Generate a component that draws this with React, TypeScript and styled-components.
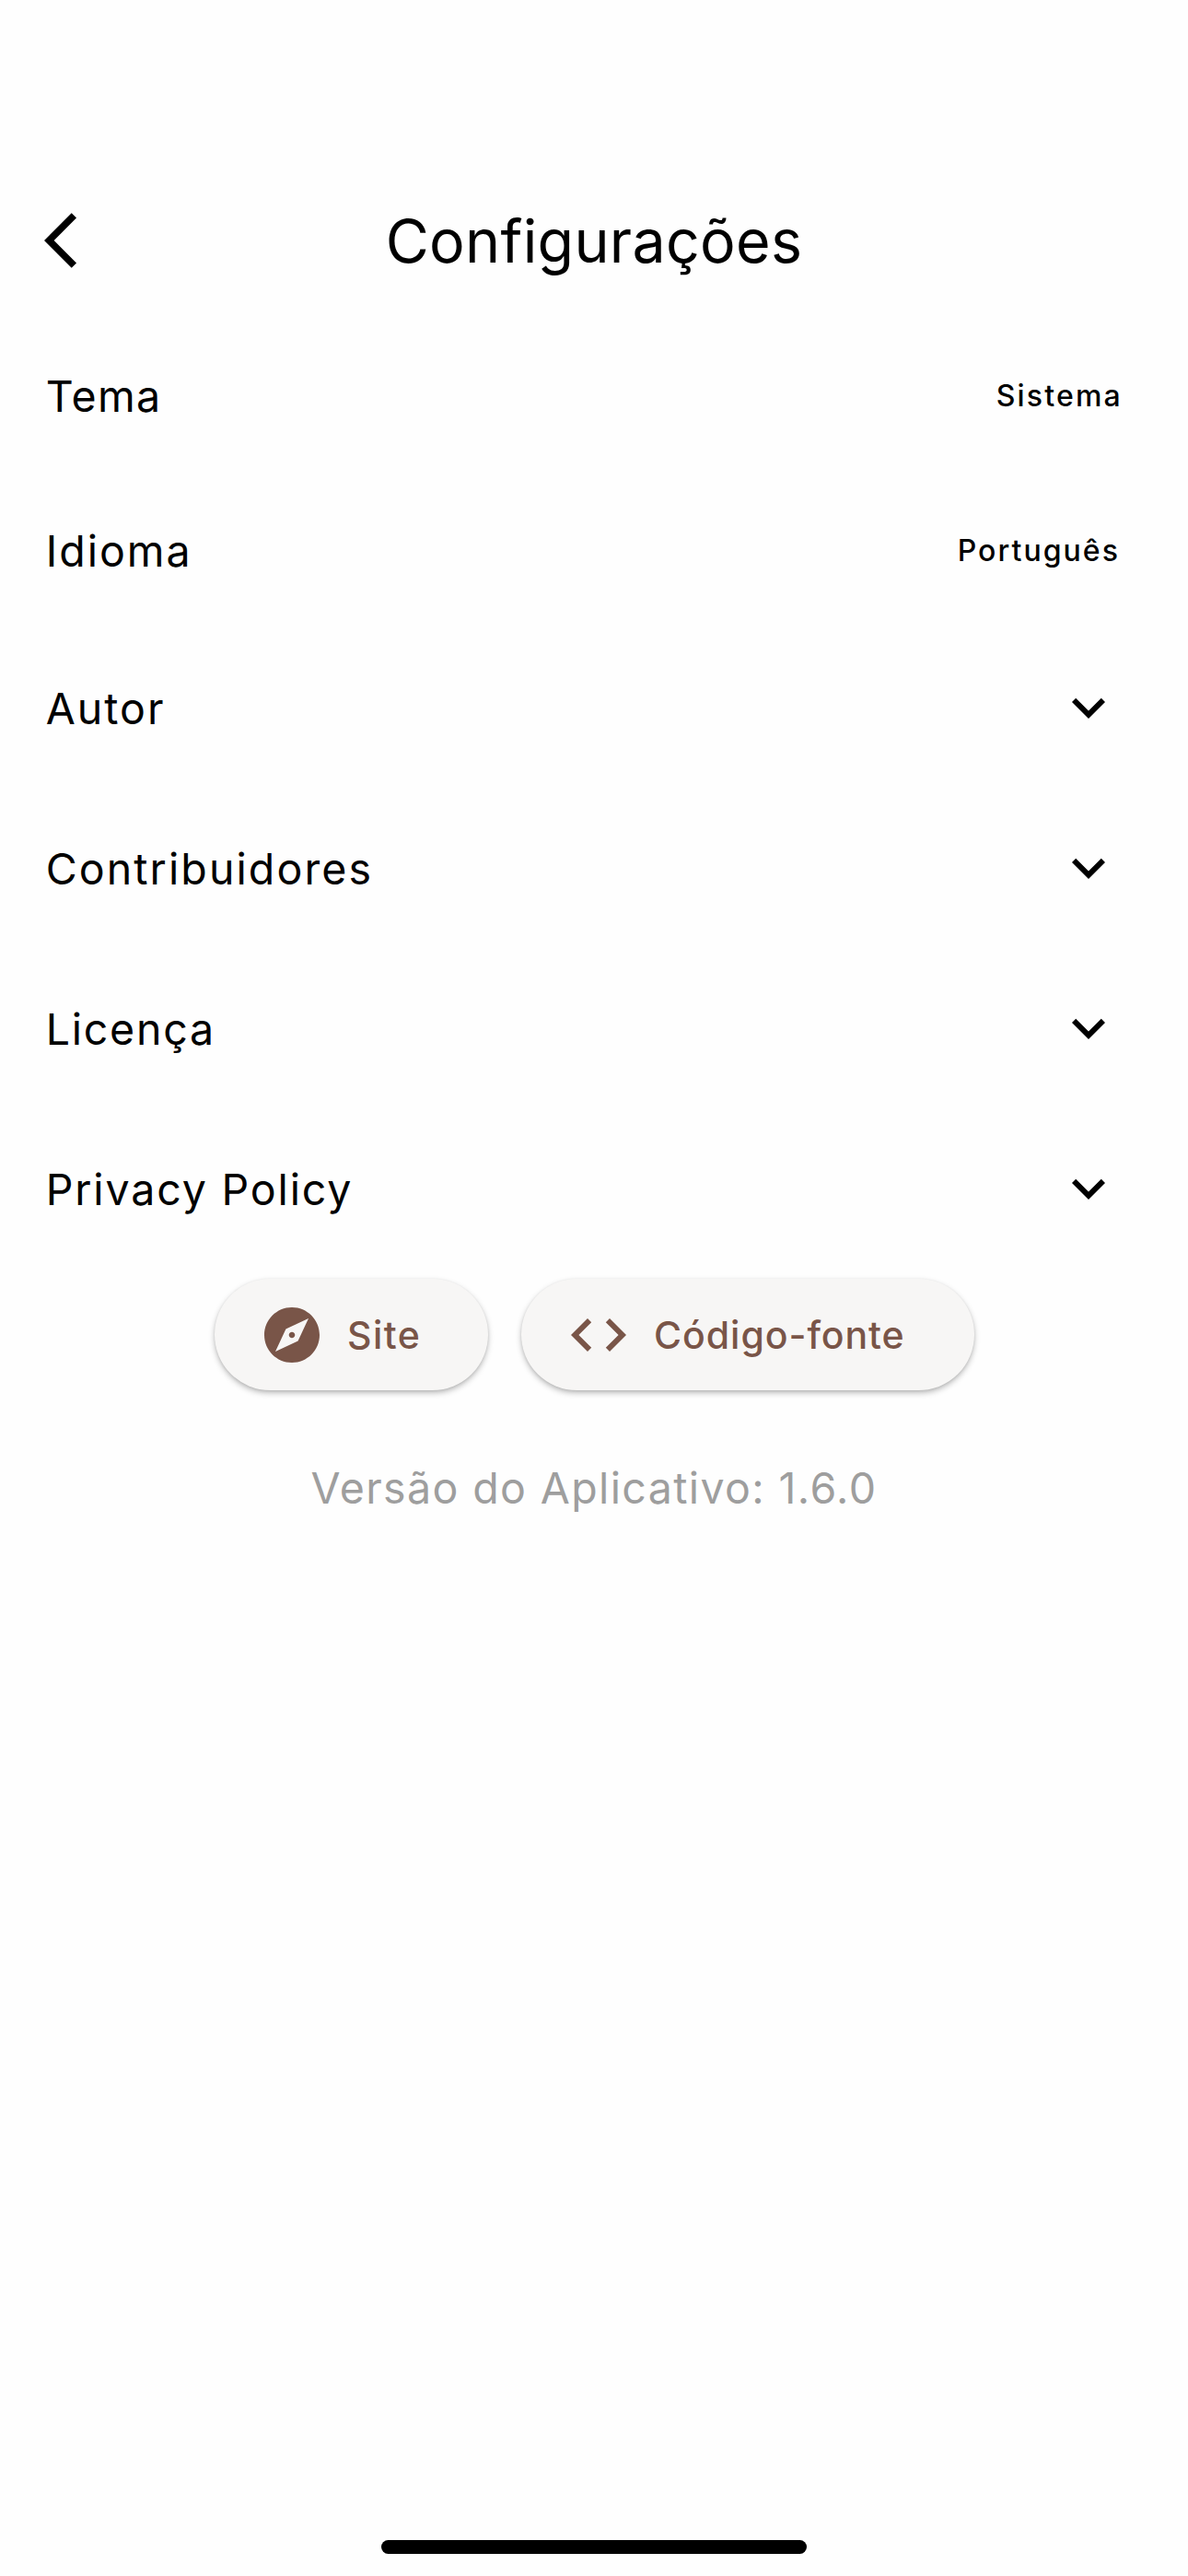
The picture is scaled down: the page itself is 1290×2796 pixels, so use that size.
import React from "react";
import styled, { createGlobalStyle } from "styled-components";

const GlobalStyle = createGlobalStyle`
  * { box-sizing: border-box; }
  html, body { margin: 0; padding: 0; background: #fefefe; }
`;

const Screen = styled.div`
  display: flex;
  flex-direction: column;
  width: 1290px;
  height: 2796px;
  padding-top: 178px;
  overflow: hidden;
  background: #fefefe;
  color: #000;
  font-family: Inter, "Liberation Sans", sans-serif;
`;

const AppBar = styled.header`
  display: grid;
  grid-template-columns: 168px 1fr 168px;
  align-items: center;
  height: 168px;
`;

const BackButton = styled.button`
  display: flex;
  width: 120px;
  padding: 0 0 2px 48px;
  border: 0;
  background: none;
  color: inherit;
`;

const Title = styled.h1<{ $spacing: number }>`
  margin: 0;
  text-align: center;
  font-size: 64.5px;
  font-weight: 400;
  line-height: 80px;
  letter-spacing: ${(p) => p.$spacing}px;
  white-space: nowrap;
`;

const List = styled.main`
  display: flex;
  flex-direction: column;
`;

const Row = styled.div<{ $height: number; $end: number }>`
  display: flex;
  align-items: center;
  justify-content: space-between;
  height: ${(p) => p.$height}px;
  padding: 0 ${(p) => p.$end}px 0 49.7px;
`;

const Label = styled.span<{ $spacing: number }>`
  font-size: 46.5px;
  line-height: 60px;
  letter-spacing: ${(p) => p.$spacing}px;
  white-space: nowrap;
`;

const Value = styled.span<{ $spacing: number }>`
  font-size: 32px;
  font-weight: 500;
  line-height: 40px;
  letter-spacing: ${(p) => p.$spacing}px;
  white-space: nowrap;
`;

const ExpandMark = styled.span`
  display: flex;
  padding-bottom: 2px;
`;

const Actions = styled.div`
  display: flex;
  justify-content: center;
  gap: 36px;
  margin-top: 10px;
`;

const Pill = styled.button<{ $width: number }>`
  display: flex;
  align-items: center;
  gap: 24.6px;
  width: ${(p) => p.$width}px;
  height: 121px;
  padding: 0 0 0 48px;
  border: 0;
  border-radius: 61px;
  background: #f7f6f5;
  color: #795548;
  box-shadow: 0 3px 6px rgba(0, 0, 0, 0.26), 0 1px 3px rgba(0, 0, 0, 0.08);
  font-family: inherit;
`;

const PillText = styled.span<{ $spacing: number }>`
  font-size: 41px;
  font-weight: 500;
  line-height: 50px;
  letter-spacing: ${(p) => p.$spacing}px;
  white-space: nowrap;
`;

const Version = styled.p<{ $spacing: number }>`
  margin: 76px 0 0;
  text-align: center;
  color: #9e9e9e;
  font-size: 46.5px;
  line-height: 60px;
  letter-spacing: ${(p) => p.$spacing}px;
`;

const HomeIndicator = styled.div`
  width: 462px;
  height: 15px;
  margin: auto auto 24px;
  border-radius: 8px;
  background: #000;
`;

const Icon = ({ d }: { d: string }) => (
  <svg width="72" height="72" viewBox="0 0 24 24" fill="currentColor" aria-hidden="true">
    <path d={d} />
  </svg>
);

const icons = {
  back: "M11.67 3.87 9.9 2.1 0 12l9.9 9.9 1.77-1.77L3.54 12z",
  expand: "M16.59 8.59 12 13.17 7.41 8.59 6 10l6 6 6-6z",
  explore:
    "M12 10.9c-.61 0-1.1.49-1.1 1.1s.49 1.1 1.1 1.1c.61 0 1.1-.49 1.1-1.1s-.49-1.1-1.1-1.1zM12 2C6.48 2 2 6.48 2 12s4.48 10 10 10 10-4.48 10-10S17.52 2 12 2zm2.19 12.19L6 18l3.81-8.19L18 6l-3.81 8.19z",
  code: "M9.4 16.6 4.8 12l4.6-4.6L8 6l-6 6 6 6 1.4-1.4zm5.2 0 4.6-4.6-4.6-4.6L16 6l6 6-6 6-1.4-1.4z",
};

const options = [
  { label: "Tema", spacing: 1.4, value: "Sistema", valueSpacing: 2.2, end: 71 },
  { label: "Idioma", spacing: 2, value: "Português", valueSpacing: 2.05, end: 74 },
];

const sections = [
  { label: "Autor", spacing: 2 },
  { label: "Contribuidores", spacing: 2.1 },
  { label: "Licença", spacing: 1.75 },
  { label: "Privacy Policy", spacing: 1.85 },
];

export default function App() {
  return (
    <>
      <GlobalStyle />
      <Screen>
        <AppBar>
          <BackButton aria-label="Voltar">
            <Icon d={icons.back} />
          </BackButton>
          <Title $spacing={0.3}>Configurações</Title>
        </AppBar>
        <List>
          {options.map((o) => (
            <Row key={o.label} $height={168} $end={o.end}>
              <Label $spacing={o.spacing}>{o.label}</Label>
              <Value $spacing={o.valueSpacing}>{o.value}</Value>
            </Row>
          ))}
          {sections.map((s) => (
            <Row key={s.label} $height={174} $end={72}>
              <Label $spacing={s.spacing}>{s.label}</Label>
              <ExpandMark>
                <Icon d={icons.expand} />
              </ExpandMark>
            </Row>
          ))}
        </List>
        <Actions>
          <Pill $width={297}>
            <Icon d={icons.explore} />
            <PillText $spacing={1.4}>Site</PillText>
          </Pill>
          <Pill $width={492}>
            <Icon d={icons.code} />
            <PillText $spacing={0.95}>Código-fonte</PillText>
          </Pill>
        </Actions>
        <Version $spacing={1.38}>Versão do Aplicativo: 1.6.0</Version>
        <HomeIndicator />
      </Screen>
    </>
  );
}
